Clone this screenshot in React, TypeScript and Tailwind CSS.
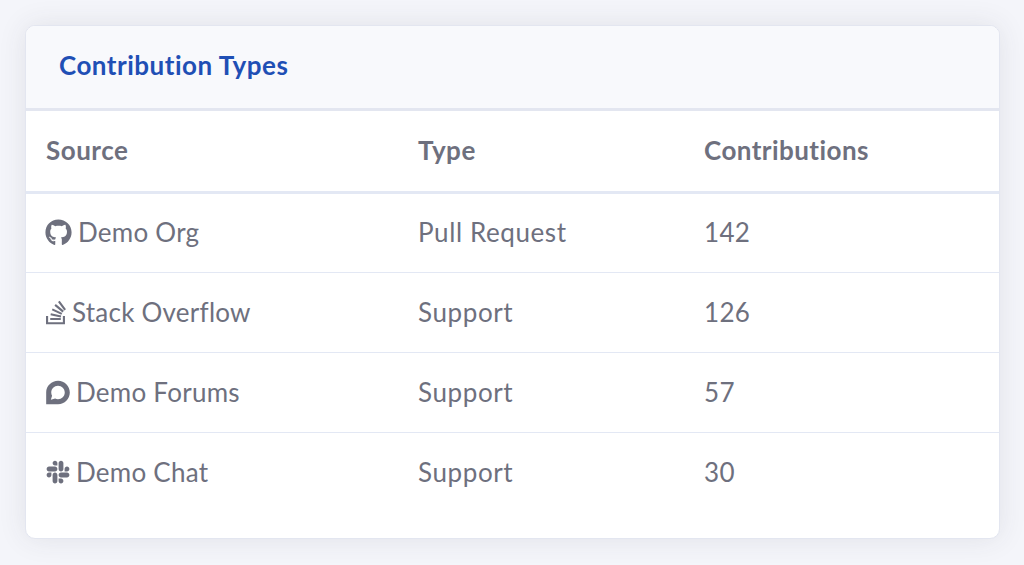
import { FaDiscourse, FaGithub, FaSlack, FaStackOverflow } from 'react-icons/fa';
import type { IconType } from 'react-icons';

type Row = {
  source: string;
  icon: IconType;
  iconSize: string;
  type: string;
  count: number;
};

const rows: Row[] = [
  { source: 'Demo Org', icon: FaGithub, iconSize: 'w-[27px] h-[27px] -ml-[1px] mr-[6px]', type: 'Pull Request', count: 142 },
  { source: 'Stack Overflow', icon: FaStackOverflow, iconSize: 'w-[22px] h-[27px] -ml-[1px] mr-[5px]', type: 'Support', count: 126 },
  { source: 'Demo Forums', icon: FaDiscourse, iconSize: 'w-[26px] h-[27px] -ml-[1px] mr-[5px]', type: 'Support', count: 57 },
  { source: 'Demo Chat', icon: FaSlack, iconSize: 'w-[26px] h-[26px] -ml-[1px] mr-[5px]', type: 'Support', count: 30 },
];

export default function App() {
  return (
    <div className="h-[565px] overflow-hidden bg-[#f4f5fa] pt-[25px] pl-[25px] pr-[24px] font-['Lato','Open_Sans',sans-serif]">
      <div className="h-[514px] overflow-hidden rounded-[10px] border border-[#e3e6f0] bg-white shadow-[0_0_28px_rgba(58,59,69,0.10)]">
        <div className="flex h-[85px] items-center border-b-[3px] border-[#e3e6f0] bg-[#f8f9fc] pb-[4px] pl-[33px]">
          <h2 className="text-[26px] leading-none font-bold tracking-[0.5px] text-[#1f4fb5]">Contribution Types</h2>
        </div>
        <table className="w-full table-fixed border-collapse text-left text-[26px] text-[#6e707e]">
          <thead>
            <tr className="h-[81px] border-b-[3px] border-[#e3e8f4]">
              <th className="w-[372px] pl-[20px] font-bold tracking-[0.5px]">Source</th>
              <th className="w-[286px] pl-[20px] font-bold tracking-[0.5px]">Type</th>
              <th className="pl-[20px] font-bold tracking-[0.45px]">Contributions</th>
            </tr>
          </thead>
          <tbody>
            {rows.map((row, i) => {
              const Icon = row.icon;
              return (
                <tr key={row.source} className={i < rows.length - 1 ? 'h-[80px] border-b border-[#e3e8f4]' : 'h-[80px]'}>
                  <td className="pl-[20px] tracking-[0.25px]">
                    <div className="flex items-center">
                      <Icon className={row.iconSize} />
                      <span>{row.source}</span>
                    </div>
                  </td>
                  <td className="pl-[20px] tracking-[0.6px]">{row.type}</td>
                  <td className="pl-[20px] tracking-[0.35px]">{row.count}</td>
                </tr>
              );
            })}
          </tbody>
        </table>
      </div>
    </div>
  );
}
